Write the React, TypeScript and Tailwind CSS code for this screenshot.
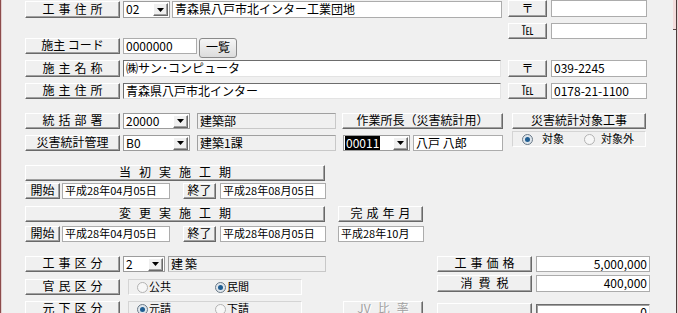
import React from "react";

const raised =
  "border border-t-white border-l-white border-r-[#696969] border-b-[#696969] shadow-[inset_-1px_-1px_0_#a0a0a0]";

function Spaced({ items, gap }: { items: string[]; gap: string }) {
  return (
    <span className={`flex ${gap}`}>
      {items.map((c, i) => (
        <span key={i}>{c}</span>
      ))}
    </span>
  );
}

function Btn({
  className = "",
  children,
  disabled,
}: {
  className?: string;
  children?: React.ReactNode;
  disabled?: boolean;
}) {
  return (
    <div
      className={`flex shrink-0 items-center justify-center whitespace-nowrap bg-[#f0f0f0] pb-[2px] text-[12px] leading-none ${raised} ${
        disabled ? "text-[#a0a0a0] [text-shadow:1px_1px_0_#ffffff]" : "text-black"
      } ${className}`}
    >
      {children}
    </div>
  );
}

function Field({
  className = "",
  children,
  right,
  sunken,
}: {
  className?: string;
  children?: React.ReactNode;
  right?: boolean;
  sunken?: boolean;
}) {
  return (
    <div
      className={`flex shrink-0 items-center overflow-hidden whitespace-nowrap bg-white px-[2px] pb-[1px] leading-none ${
        right ? "justify-end" : ""
      } ${
        sunken
          ? "border border-t-[#6d6d6d] border-l-[#6d6d6d] border-b-[#e3e3e3] border-r-[#e3e3e3]"
          : "border border-[#acacac]"
      } ${className}`}
    >
      {children}
    </div>
  );
}

function Box({ className = "", children }: { className?: string; children?: React.ReactNode }) {
  return (
    <div
      className={`flex shrink-0 items-center whitespace-nowrap border border-t-[#a0a0a0] border-l-[#a0a0a0] border-b-[#c8c8c8] border-r-[#c8c8c8] bg-[#f0f0f0] px-[2px] pb-[1px] text-[12px] leading-none ${className}`}
    >
      {children}
    </div>
  );
}

function Combo({ className = "", value, selected }: { className?: string; value: string; selected?: boolean }) {
  return (
    <div
      className={`flex shrink-0 items-center border border-[#9c9c9c] bg-white pl-[1px] pr-[1px] text-[12px] leading-none ${className}`}
    >
      <div className="flex flex-1 items-center">
        {selected ? (
          <span className="flex h-[14px] items-center bg-black px-[1px] pb-[1px] text-white">{value}</span>
        ) : (
          <span className="pb-[1px] pl-[1px]">{value}</span>
        )}
      </div>
      <div className={`flex h-[13px] w-[15px] items-center justify-center bg-[#f0f0f0] ${raised}`}>
        <svg width="7" height="4" viewBox="0 0 7 4">
          <polygon points="0,0 7,0 3.5,4" fill="#000" />
        </svg>
      </div>
    </div>
  );
}

function Radio({ on }: { on?: boolean }) {
  return (
    <span
      className={`flex h-[11px] w-[11px] shrink-0 items-center justify-center rounded-full border ${
        on ? "border-[#6b7a88] bg-[#dfe6ec]" : "border-[#b3b3b3] bg-[#f7f7f7]"
      }`}
    >
      {on && <span className="h-[5px] w-[5px] rounded-full bg-[#1f5d92]" />}
    </span>
  );
}

function RadioPair({ a, b, first }: { a: string; b: string; first: boolean }) {
  return (
    <div className="ml-[8px] flex h-[16px] w-[174px] shrink-0 items-center border border-t-[#d4d4d4] border-l-[#d4d4d4] border-b-white border-r-white text-[11px] leading-none">
      <div className="ml-[8px] flex w-[78px] items-center gap-[1px]">
        <Radio on={first} />
        <span className="pb-[1px]">{a}</span>
      </div>
      <div className="flex items-center gap-[1px]">
        <Radio on={!first} />
        <span className="pb-[1px]">{b}</span>
      </div>
    </div>
  );
}

const four = "gap-[4px]";

function Period() {
  return (
    <>
      <Btn className="w-[35px]">開始</Btn>
      <Field className="ml-[2px] w-[108px] px-[1px] text-[11px]">平成28年04月05日</Field>
      <Btn className="ml-[13px] w-[33px]">終了</Btn>
      <Field className="ml-[4px] w-[106px] px-[1px] text-[11px]">平成28年08月05日</Field>
    </>
  );
}

export default function App() {
  return (
    <div className="flex h-[313px] w-[678px] overflow-hidden bg-[#f0f0f0] font-['Noto_Sans_CJK_JP',sans-serif] text-[12px] text-black">
      <div className="w-[1px] shrink-0 bg-[#8c4b4b]" />
      <div className="w-[1px] shrink-0 bg-[#e2cfcf]" />

      <div className="flex w-[671px] shrink-0 flex-col pl-[23px]">
        {/* 工事住所 / 施主 */}
        <div className="flex items-start">
          <div className="flex w-[477px] flex-col">
            <div className="mt-[1px] flex h-[17px]">
              <Btn className="w-[95px]">
                <Spaced items={["工", "事", "住", "所"]} gap={four} />
              </Btn>
              <Combo className="ml-[3px] w-[47px]" value="02" />
              <Field className="ml-[2px] w-[330px]">青森県八戸市北インター工業団地</Field>
            </div>
            <div className="mt-[20px] flex h-[16px]">
              <Btn className="w-[95px]">施主 コード</Btn>
              <Field className="ml-[3px] w-[74px]">0000000</Field>
              <div className="ml-[2px] flex h-[20px] w-[38px] shrink-0 items-center justify-center rounded-[3px] border border-[#8a8a8a] bg-gradient-to-b from-[#f6f6f6] to-[#dcdcdc] pb-[2px] leading-none">
                一覧
              </div>
            </div>
            <div className="mt-[6px] flex h-[17px]">
              <Btn className="w-[95px]">
                <Spaced items={["施", "主", "名", "称"]} gap={four} />
              </Btn>
              <Field sunken className="ml-[3px] w-[378px]">㈱サン･コンピュータ</Field>
            </div>
            <div className="mt-[6px] flex h-[16px]">
              <Btn className="w-[95px]">
                <Spaced items={["施", "主", "住", "所"]} gap={four} />
              </Btn>
              <Field sunken className="ml-[3px] w-[378px]">青森県八戸市北インター</Field>
            </div>
          </div>

          <div className="ml-[6px] flex flex-col">
            <div className="flex h-[17px]">
              <Btn className="w-[39px]">〒</Btn>
              <Field className="ml-[4px] w-[96px]" />
            </div>
            <div className="mt-[6px] flex h-[16px]">
              <Btn className="w-[39px]">℡</Btn>
              <Field className="ml-[4px] w-[96px]" />
            </div>
            <div className="mt-[21px] flex h-[17px]">
              <Btn className="w-[39px]">〒</Btn>
              <Field className="ml-[4px] w-[96px]">039-2245</Field>
            </div>
            <div className="mt-[6px] flex h-[16px]">
              <Btn className="w-[39px]">℡</Btn>
              <Field className="ml-[4px] w-[96px]">0178-21-1100</Field>
            </div>
          </div>
        </div>

        {/* 統括部署 / 災害統計 */}
        <div className="mt-[14px] flex h-[17px]">
          <Btn className="w-[95px]">
            <Spaced items={["統", "括", "部", "署"]} gap={four} />
          </Btn>
          <Combo className="ml-[3px] w-[67px]" value="20000" />
          <Box className="ml-[7px] w-[139px]">建築部</Box>
          <Btn className="ml-[6px] w-[161px]">作業所長（災害統計用）</Btn>
          <Btn className="ml-[9px] w-[134px]">災害統計対象工事</Btn>
        </div>
        <div className="mt-[6px] flex h-[16px] items-start">
          <Btn className="h-[16px] w-[95px]">災害統計管理</Btn>
          <Combo className="ml-[3px] h-[16px] w-[67px]" value="B0" />
          <Box className="ml-[7px] h-[16px] w-[139px]">建築1課</Box>
          <Combo className="ml-[7px] h-[16px] w-[67px]" value="00011" selected />
          <Field className="ml-[3px] h-[16px] w-[90px]">八戸 八郎</Field>
          <div className="ml-[9px] mt-[-4px] flex h-[16px] w-[134px] shrink-0 items-center border border-t-[#d4d4d4] border-l-[#d4d4d4] border-b-white border-r-white text-[11px] leading-none">
            <div className="ml-[9px] flex w-[62px] items-center gap-[9px]">
              <Radio on />
              <span className="pb-[1px]">対象</span>
            </div>
            <div className="flex items-center gap-[6px]">
              <Radio />
              <span className="pb-[1px]">対象外</span>
            </div>
          </div>
        </div>

        {/* 工期 */}
        <div className="mt-[14px] flex h-[16px]">
          <Btn className="w-[300px]">
            <Spaced items={["当", "初", "実", "施", "工", "期"]} gap="gap-[8px]" />
          </Btn>
        </div>
        <div className="mt-[2px] flex h-[16px]">
          <Period />
        </div>
        <div className="mt-[7px] flex h-[16px]">
          <Btn className="w-[300px]">
            <Spaced items={["変", "更", "実", "施", "工", "期"]} gap="gap-[8px]" />
          </Btn>
          <Btn className="ml-[13px] w-[85px]">
            <Spaced items={["完", "成", "年", "月"]} gap={four} />
          </Btn>
        </div>
        <div className="mt-[4px] flex h-[16px]">
          <Period />
          <Field className="ml-[12px] w-[86px] px-[1px] text-[11px]">平成28年10月</Field>
        </div>

        {/* 区分 / 価格 */}
        <div className="mt-[14px] flex items-start">
          <div className="flex flex-col">
            <div className="flex h-[16px]">
              <Btn className="w-[95px]">
                <Spaced items={["工", "事", "区", "分"]} gap={four} />
              </Btn>
              <Combo className="ml-[3px] w-[42px]" value="2" />
              <Box className="ml-[3px] w-[158px]">
                <Spaced items={["建", "築"]} gap="gap-[2px]" />
              </Box>
            </div>
            <div className="mt-[7px] flex h-[16px]">
              <Btn className="w-[95px]">
                <Spaced items={["官", "民", "区", "分"]} gap={four} />
              </Btn>
              <RadioPair a="公共" b="民間" first={false} />
            </div>
            <div className="mt-[6px] flex h-[16px]">
              <Btn className="w-[95px]">
                <Spaced items={["元", "下", "区", "分"]} gap={four} />
              </Btn>
              <RadioPair a="元請" b="下請" first />
            </div>
          </div>

          <div className="ml-[17px] mt-[45px] flex h-[16px]">
            <Btn disabled className="w-[80px]">
              <Spaced items={["JV", "比", "率"]} gap="gap-[7px]" />
            </Btn>
          </div>

          <div className="ml-[14px] flex flex-col">
            <div className="flex h-[16px]">
              <Btn className="w-[95px]">
                <Spaced items={["工", "事", "価", "格"]} gap={four} />
              </Btn>
              <Field right className="ml-[4px] w-[114px]">5,000,000</Field>
            </div>
            <div className="mt-[3px] flex h-[17px]">
              <Btn className="w-[95px]">
                <Spaced items={["消", "費", "税"]} gap="gap-[6px]" />
              </Btn>
              <Field right className="ml-[4px] w-[114px]">400,000</Field>
            </div>
            <div className="mt-[11px] flex h-[16px] items-start">
              <Btn className="h-[16px] w-[95px]" />
              <Field
                right
                sunken
                className="ml-[4px] mt-[1px] h-[16px] w-[114px] shadow-[inset_1px_1px_0_#a0a0a0]"
              >
                0
              </Field>
            </div>
          </div>
        </div>
      </div>

      <div className="flex w-[3px] shrink-0 flex-col">
        <div className="h-[30px] border-b border-[#5a4848] bg-[#f3dcdc]" />
      </div>
      <div className="w-[1px] shrink-0 bg-[#4e3b3b]" />
      <div className="w-[1px] shrink-0 bg-[#ead6d6]" />
    </div>
  );
}
